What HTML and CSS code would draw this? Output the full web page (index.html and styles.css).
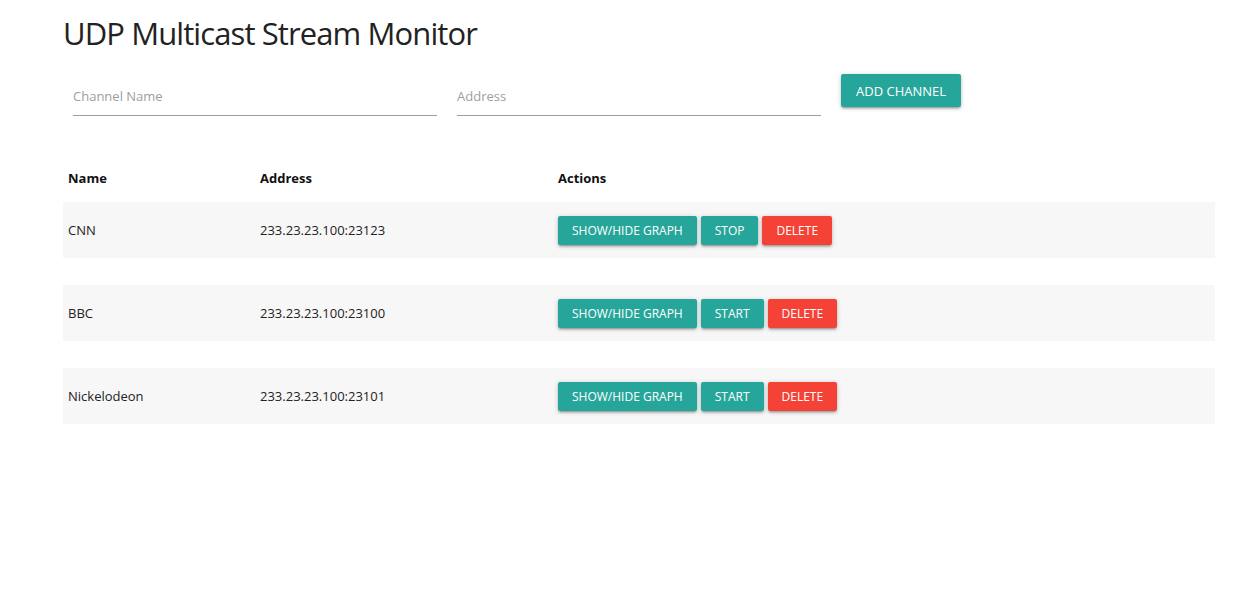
FILE: index.html
```html
<!DOCTYPE html>
<html>
<head>
<meta charset="utf-8">
<title>UDP Multicast Stream Monitor</title>
<link rel="stylesheet" href="styles.css">
</head>
<body>
<div class="container">
  <h1 class="title">UDP Multicast Stream Monitor</h1>
  <div class="form-row">
    <div class="col"><input class="field" type="text" placeholder="Channel Name"></div>
    <div class="col"><input class="field" type="text" placeholder="Address"></div>
    <div class="col"><button class="btn btn-add">Add Channel</button></div>
  </div>
  <table class="channels">
    <thead>
      <tr><th class="c-name">Name</th><th class="c-addr">Address</th><th class="c-act">Actions</th></tr>
    </thead>
    <tbody>
      <tr class="row">
        <td>CNN</td><td>233.23.23.100:23123</td>
        <td><div class="actions"><button class="btn btn-sm">Show/Hide Graph</button><button class="btn btn-sm">Stop</button><button class="btn btn-sm btn-red">Delete</button></div></td>
      </tr>
      <tr class="spacer"><td colspan="3"></td></tr>
      <tr class="row">
        <td>BBC</td><td>233.23.23.100:23100</td>
        <td><div class="actions"><button class="btn btn-sm">Show/Hide Graph</button><button class="btn btn-sm">Start</button><button class="btn btn-sm btn-red">Delete</button></div></td>
      </tr>
      <tr class="spacer"><td colspan="3"></td></tr>
      <tr class="row">
        <td>Nickelodeon</td><td>233.23.23.100:23101</td>
        <td><div class="actions"><button class="btn btn-sm">Show/Hide Graph</button><button class="btn btn-sm">Start</button><button class="btn btn-sm btn-red">Delete</button></div></td>
      </tr>
    </tbody>
  </table>
</div>
</body>
</html>
```

FILE: styles.css
```css
html, body {
  margin: 0;
  padding: 0;
  background: #fff;
  font-family: "Open Sans", "Noto Sans", sans-serif;
  color: rgba(0,0,0,0.87);
}
.container {
  width: 1152px;
  margin-left: 63px;
}
.title {
  font-weight: 400;
  font-size: 31px;
  letter-spacing: -0.9px;
  line-height: 40px;
  margin: 13px 0 0 0;
  color: #222;
}
.form-row {
  display: flex;
  margin-top: 20px;
}
.col {
  width: 384px;
  padding: 0 10px;
  box-sizing: border-box;
}
.field {
  display: block;
  width: 100%;
  box-sizing: border-box;
  border: none;
  border-bottom: 1px solid #9e9e9e;
  height: 43px;
  padding: 4px 0 0 0;
  margin: 0;
  font-family: inherit;
  font-size: 13px;
  outline: none;
  background: transparent;
}
.field::placeholder { color: #9e9e9e; }
.btn {
  border: none;
  border-radius: 2px;
  background: #26a69a;
  color: #fff;
  font-family: inherit;
  text-transform: uppercase;
  box-shadow: 0 2px 2px 0 rgba(0,0,0,0.14), 0 3px 1px -2px rgba(0,0,0,0.12), 0 1px 5px 0 rgba(0,0,0,0.2);
  cursor: pointer;
}
.btn-add {
  height: 33px;
  padding: 0 15px;
  font-size: 13px;
  margin-top: 1px;
}
.actions {
  display: flex;
  gap: 4px;
  align-items: center;
}
.btn-sm {
  height: 29px;
  padding: 0 14px;
  font-size: 12px;
}
.btn-red { background: #f44336; }
.channels {
  width: 100%;
  border-collapse: collapse;
  margin-top: 39px;
  font-size: 13px;
}
.channels th {
  text-align: left;
  font-weight: 700;
  padding: 14px 5px 15px 5px;
  color: #111;
}
.c-name { width: 182px; }
.c-addr { width: 288px; }
.row { background: #f7f7f7; height: 56px; }
.row td { padding: 0 5px; color: #222; }
.spacer { height: 27px; }
.spacer td { padding: 0; }
```
